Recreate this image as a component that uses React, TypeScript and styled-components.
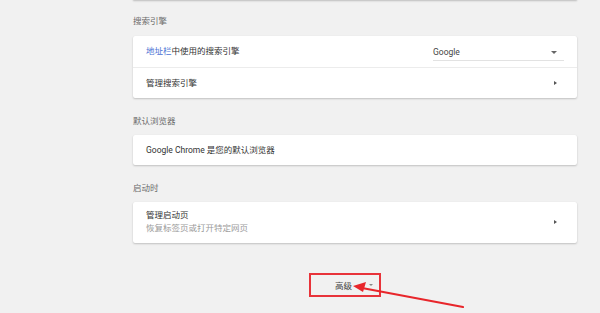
import styled, { createGlobalStyle } from "styled-components";

const GlobalStyle = createGlobalStyle`
  html, body {
    margin: 0;
    padding: 0;
    background: #f1f1f1;
    overflow: hidden;
  }
  * {
    box-sizing: border-box;
  }
`;

const searchRows = [
  { key: "engine", kind: "select" },
  { key: "manage", kind: "link" },
];

export default function App() {
  return (
    <>
      <GlobalStyle />
      <Page>
        <Column>
          <TopStub />

          <Heading $first>搜索引擎</Heading>
          <Card>
            {searchRows.map((row, i) =>
              row.kind === "select" ? (
                <Row key={row.key} $divider={i > 0}>
                  <RowText>
                    <Link>地址栏</Link>中使用的搜索引擎
                  </RowText>
                  <Select>
                    <span>Google</span>
                    <DropCaret />
                  </Select>
                </Row>
              ) : (
                <Row key={row.key} $divider={i > 0}>
                  <RowText>管理搜索引擎</RowText>
                  <Chevron />
                </Row>
              )
            )}
          </Card>

          <Heading>默认浏览器</Heading>
          <Card>
            <Row $height={30}>
              <RowText>Google Chrome 是您的默认浏览器</RowText>
            </Row>
          </Card>

          <Heading>启动时</Heading>
          <Card>
            <TallRow>
              <TwoLine>
                <RowText>管理启动页</RowText>
                <SubText>恢复标签页或打开特定网页</SubText>
              </TwoLine>
              <Chevron />
            </TallRow>
          </Card>

          <Footer>
            <AdvancedButton>
              <span>高级</span>
              <SmallCaret />
            </AdvancedButton>
          </Footer>
        </Column>

        <Annotation width="600" height="313" viewBox="0 0 600 313">
          <line
            x1="463"
            y1="307"
            x2="362"
            y2="288"
            stroke="#e8262b"
            strokeWidth="2.2"
            strokeLinecap="round"
          />
          <polygon points="353,286 366,282 363,292" fill="#e8262b" />
        </Annotation>
      </Page>
    </>
  );
}

const Page = styled.div`
  position: relative;
  width: 600px;
  height: 313px;
  background: #f1f1f1;
  font-family: Roboto, "Noto Sans CJK SC", sans-serif;
  font-size: 8.5px;
  color: #333;
`;

const Column = styled.div`
  width: 577px;
  padding-left: 133px;
  display: flex;
  flex-direction: column;
`;

const TopStub = styled.div`
  height: 6px;
  margin-top: -6px;
  background: #fff;
  box-shadow: 0 1px 2px rgba(0, 0, 0, 0.22);
`;

const Heading = styled.div<{ $first?: boolean }>`
  padding: ${(p) => (p.$first ? "14px 0 8px" : "16px 0 7px")};
  line-height: 14px;
  color: #6b6b6b;
`;

const Card = styled.div`
  background: #fff;
  border-radius: 2px;
  box-shadow: 0 1px 2px rgba(0, 0, 0, 0.2), 0 0 1px rgba(0, 0, 0, 0.06);
  display: flex;
  flex-direction: column;
`;

const Row = styled.div<{ $divider?: boolean; $height?: number }>`
  height: ${(p) => p.$height ?? 31}px;
  padding: 0 13px;
  display: flex;
  align-items: center;
  justify-content: space-between;
  border-top: ${(p) => (p.$divider ? "1px solid #ececec" : "none")};
`;

const TallRow = styled.div`
  padding: 7px 13px 8px;
  display: flex;
  align-items: center;
  justify-content: space-between;
`;

const RowText = styled.div`
  line-height: 13px;
  color: #333;
`;

const Link = styled.span`
  color: #4a72d4;
`;

const TwoLine = styled.div`
  display: flex;
  flex-direction: column;
`;

const SubText = styled.div`
  line-height: 13px;
  color: #9a9a9a;
`;

const Select = styled.div`
  width: 131px;
  height: 17px;
  margin-top: 2px;
  display: flex;
  align-items: center;
  justify-content: space-between;
  padding-right: 7px;
  border-bottom: 1px solid #e2e2e2;
  color: #444;
`;

const DropCaret = styled.span`
  width: 0;
  height: 0;
  border-left: 3px solid transparent;
  border-right: 3px solid transparent;
  border-top: 3px solid #666;
`;

const Chevron = styled.span`
  width: 0;
  height: 0;
  margin-right: 7px;
  border-top: 2.5px solid transparent;
  border-bottom: 2.5px solid transparent;
  border-left: 3px solid #555;
`;

const Footer = styled.div`
  padding: 30px 0 0 176px;
  display: flex;
`;

const AdvancedButton = styled.div`
  width: 72px;
  height: 24px;
  border: 2px solid #e8333a;
  display: flex;
  align-items: center;
  padding-left: 24px;
  gap: 17px;
  color: #444;
`;

const SmallCaret = styled.span`
  width: 0;
  height: 0;
  border-left: 2.5px solid transparent;
  border-right: 2.5px solid transparent;
  border-top: 2.5px solid #888;
`;

const Annotation = styled.svg`
  position: absolute;
  left: 0;
  top: 0;
  pointer-events: none;
`;
